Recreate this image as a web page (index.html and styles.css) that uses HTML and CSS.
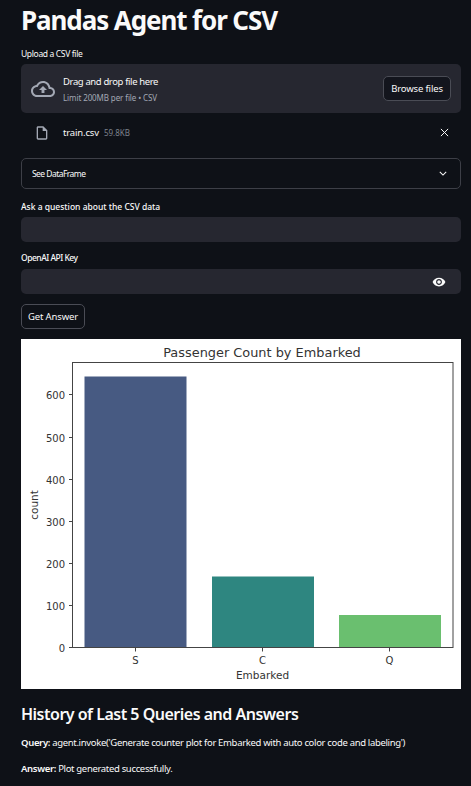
FILE: index.html
```html
<!DOCTYPE html>
<html lang="en">
<head>
    <meta charset="UTF-8">
    <meta name="viewport" content="width=device-width, initial-scale=1.0">
    <title>Pandas Agent for CSV</title>
    <link rel="stylesheet" href="styles.css">
</head>
<body>
    <div class="container">
        <h1>Pandas Agent for CSV</h1>

        <label class="field-label upload-label">Upload a CSV file</label>
        <div class="dropzone">
            <svg class="cloud-icon" viewBox="0 0 24 24" width="24" height="24">
                <path fill="#a3a8b4" d="M19.35 10.04C18.67 6.59 15.64 4 12 4 9.11 4 6.6 5.64 5.35 8.04 2.34 8.36 0 10.91 0 14c0 3.31 2.69 6 6 6h13c2.76 0 5-2.24 5-5 0-2.64-2.05-4.78-4.65-4.96zM19 18H6c-2.21 0-4-1.79-4-4 0-2.05 1.53-3.76 3.56-3.97l1.07-.11.5-.95C8.08 7.14 9.94 6 12 6c2.62 0 4.88 1.86 5.39 4.43l.3 1.5 1.53.11c1.56.1 2.78 1.41 2.78 2.96 0 1.65-1.35 3-3 3zM8 13h2.55v3h2.9v-3H16l-4-4z"/>
            </svg>
            <div class="dropzone-text">
                <div class="drop-title">Drag and drop file here</div>
                <div class="drop-limit">Limit 200MB per file • CSV</div>
            </div>
            <button class="btn browse-btn">Browse files</button>
        </div>

        <div class="file-row">
            <svg class="file-icon" viewBox="0 0 24 24" width="16" height="16">
                <path fill="#a3a8b4" d="M6 2c-1.1 0-2 .9-2 2v16c0 1.1.9 2 2 2h12c1.1 0 2-.9 2-2V8l-6-6H6zm0 2h7v5h5v11H6V4z"/>
            </svg>
            <span class="file-name">train.csv</span>
            <span class="file-size">59.8KB</span>
            <svg class="close-icon" viewBox="0 0 10 10" width="9" height="9">
                <path stroke="#fafafa" stroke-width="1.1" fill="none" d="M1 1l8 8M9 1l-8 8"/>
            </svg>
        </div>

        <div class="expander">
            <span>See DataFrame</span>
            <svg viewBox="0 0 10 6" width="8" height="5">
                <path stroke="#fafafa" stroke-width="1.3" fill="none" d="M1 1l4 4 4-4"/>
            </svg>
        </div>

        <label class="field-label question-label">Ask a question about the CSV data</label>
        <div class="text-input"></div>

        <label class="field-label key-label">OpenAI API Key</label>
        <div class="text-input key-input">
            <svg viewBox="0 0 24 24" width="14" height="14">
                <path fill="#fafafa" d="M12 4.5C7 4.5 2.73 7.61 1 12c1.73 4.39 6 7.5 11 7.5s9.27-3.11 11-7.5c-1.73-4.39-6-7.5-11-7.5zM12 17c-2.76 0-5-2.24-5-5s2.24-5 5-5 5 2.24 5 5-2.24 5-5 5zm0-8c-1.66 0-3 1.34-3 3s1.34 3 3 3 3-1.34 3-3-1.34-3-3-3z"/>
            </svg>
        </div>

        <button class="btn answer-btn">Get Answer</button>

        <div class="chart">
            <svg viewBox="0 0 440 350" width="440" height="350">
                <text x="241" y="18" class="chart-title">Passenger Count by Embarked</text>

                <rect x="63.5" y="37.5" width="102" height="271" fill="#475a82"/>
                <rect x="191" y="237.5" width="102" height="71" fill="#2e8680"/>
                <rect x="318" y="276" width="102" height="32.5" fill="#6abf6f"/>

                <rect x="51.5" y="23.5" width="380.5" height="285" fill="none" stroke="#444" stroke-width="1"/>

                <g stroke="#444" stroke-width="1">
                    <path d="M48 308.5h3.5M48 266.5h3.5M48 224.5h3.5M48 182.5h3.5M48 140.5h3.5M48 98.5h3.5M48 55.5h3.5"/>
                    <path d="M114.5 309v3.5M241.5 309v3.5M368.5 309v3.5"/>
                </g>

                <g class="tick-label y-ticks">
                    <text x="44" y="313">0</text>
                    <text x="44" y="271">100</text>
                    <text x="44" y="229">200</text>
                    <text x="44" y="187">300</text>
                    <text x="44" y="145">400</text>
                    <text x="44" y="103">500</text>
                    <text x="44" y="60">600</text>
                </g>
                <g class="tick-label x-ticks">
                    <text x="114.5" y="325">S</text>
                    <text x="241.5" y="325">C</text>
                    <text x="368.5" y="325">Q</text>
                </g>
                <text x="241.5" y="340" class="axis-label">Embarked</text>
                <text class="axis-label" transform="translate(17 166) rotate(-90)">count</text>
            </svg>
        </div>

        <h2>History of Last 5 Queries and Answers</h2>
        <p class="query"><b>Query:</b> agent.invoke('Generate counter plot for Embarked with auto color code and labeling')</p>
        <p class="answer"><b>Answer:</b> Plot generated successfully.</p>
    </div>
</body>
</html>
```

FILE: styles.css
```css
body {
    font-family: "Noto Sans", "Open Sans", sans-serif;
    margin: 0;
    background-color: #0e1117;
    color: #fafafa;
    overflow: hidden;
}
.container {
    width: 440px;
    margin-left: 21px;
    height: 786px;
}
h1 {
    margin: 0;
    padding-top: 2px;
    font-size: 26px;
    line-height: 36px;
    font-weight: 700;
    letter-spacing: -1.1px;
}
h2 {
    margin: 10px 0 0;
    font-size: 16px;
    line-height: 30px;
    font-weight: 600;
    letter-spacing: -0.5px;
}
.field-label {
    display: block;
    font-size: 8.5px;
    line-height: 12px;
}
.upload-label {
    margin-top: 10px;
    margin-bottom: 4px;
    letter-spacing: -0.35px;
}
.question-label {
    margin-top: 12px;
    margin-bottom: 4px;
    font-weight: 500;
}
.key-label {
    margin-top: 10px;
    margin-bottom: 5px;
    font-weight: 500;
    letter-spacing: -0.5px;
}
.dropzone {
    display: flex;
    align-items: center;
    height: 49px;
    padding: 0 10px;
    background-color: #262730;
    border-radius: 5px;
}
.cloud-icon {
    margin-right: 8px;
}
.dropzone-text {
    flex: 1;
    padding-top: 2px;
}
.drop-title {
    font-size: 9.5px;
    line-height: 14px;
    letter-spacing: -0.38px;
}
.drop-limit {
    margin-top: 3px;
    font-size: 8px;
    line-height: 12px;
    color: #a3a8b4;
    letter-spacing: -0.1px;
}
.btn {
    font-family: inherit;
    color: #fafafa;
    background-color: #13151d;
    border: 1px solid #4a4c55;
    border-radius: 5px;
    font-size: 9.5px;
    letter-spacing: -0.15px;
    padding: 0;
}
.browse-btn {
    width: 68px;
    height: 25px;
}
.file-row {
    display: flex;
    align-items: center;
    box-sizing: border-box;
    height: 44px;
    padding-left: 13px;
    padding-bottom: 5px;
    font-size: 9.5px;
}
.file-name {
    margin-left: 13px;
    letter-spacing: -0.15px;
}
.file-size {
    margin-left: 5px;
    font-size: 8px;
    color: #7d818c;
}
.close-icon {
    margin-left: auto;
    margin-right: 12px;
}
.expander {
    display: flex;
    align-items: center;
    justify-content: space-between;
    box-sizing: border-box;
    height: 31px;
    margin-top: 1px;
    padding: 0 13px 0 10px;
    border: 1px solid #3d3f47;
    border-radius: 5px;
    font-size: 8.5px;
    letter-spacing: -0.55px;
}
.text-input {
    height: 25px;
    background-color: #262730;
    border-radius: 5px;
}
.key-input {
    display: flex;
    align-items: center;
    justify-content: flex-end;
    padding-right: 15px;
}
.answer-btn {
    display: block;
    width: 64px;
    height: 25px;
    margin-top: 10px;
    background-color: #0e1117;
}
.chart {
    margin-top: 10px;
    height: 350px;
    background-color: #fff;
}
.chart svg {
    display: block;
}
.chart text {
    font-family: "DejaVu Sans", sans-serif;
    fill: #333;
}
.chart .chart-title {
    font-size: 12.9px;
    text-anchor: middle;
}
.tick-label {
    font-size: 10px;
}
.y-ticks {
    text-anchor: end;
}
.x-ticks {
    text-anchor: middle;
}
.chart .axis-label {
    font-size: 10.5px;
    text-anchor: middle;
}
p {
    margin: 0;
    font-size: 9.5px;
    line-height: 14px;
    letter-spacing: -0.33px;
}
b {
    font-weight: 600;
}
.query {
    margin-top: 7px;
}
.answer {
    margin-top: 12px;
}
```
